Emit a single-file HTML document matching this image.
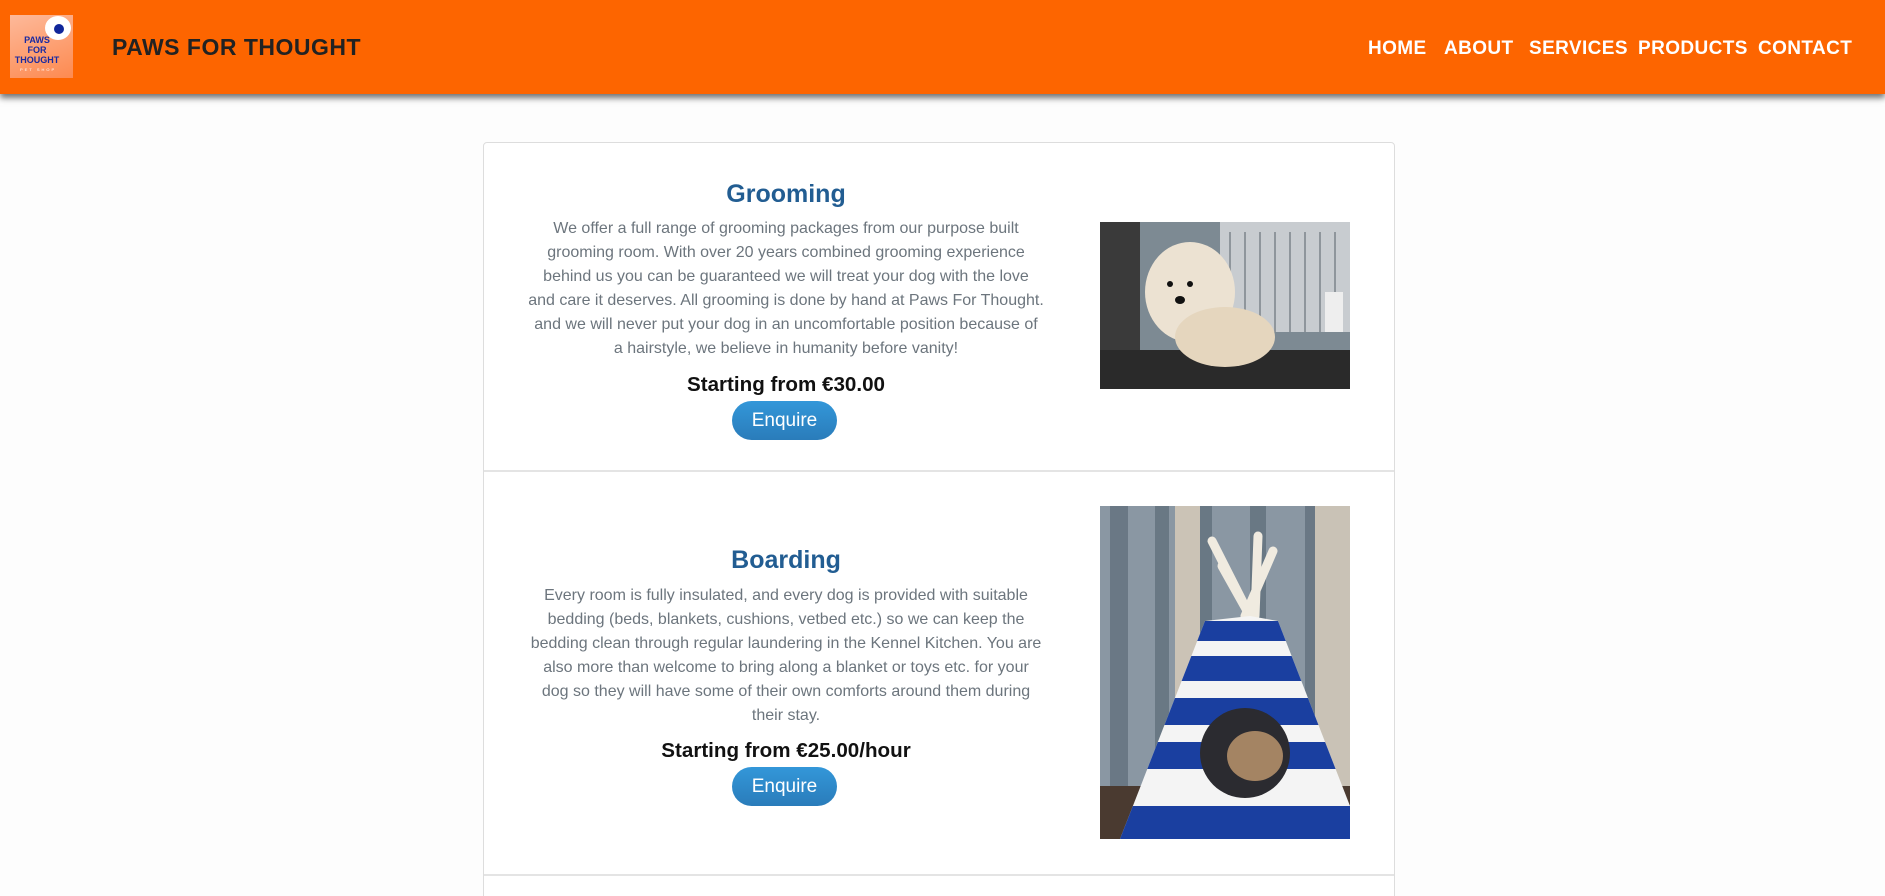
<!DOCTYPE html>
<html><head><meta charset="utf-8"><style>
*{margin:0;padding:0;box-sizing:border-box}
html,body{width:1885px;height:896px;overflow:hidden}
body{background:#fdfdfd;font-family:"Liberation Sans",sans-serif;position:relative}
.hdr{position:absolute;left:0;top:0;width:1885px;height:94px;background:#fd6500;box-shadow:0 4px 6px rgba(0,0,0,.55)}
.logo{position:absolute;left:10px;top:15px;width:63px;height:63px;background:linear-gradient(160deg,#fdb99a,#fd8a50)}
.logo .b{position:absolute;left:35px;top:1px;width:26px;height:24px;border-radius:50%;background:#fff}
.logo .b i{position:absolute;left:9px;top:8px;width:10px;height:10px;border-radius:50%;background:#10269a}
.logo .t{position:absolute;left:2px;top:20px;width:50px;text-align:center;color:#1a2aa0;font:bold 9px/10px "Liberation Sans",sans-serif}
.logo .s{position:absolute;left:10px;top:52px;color:#fff;font-size:4px;letter-spacing:2px}
.title{position:absolute;left:112px;top:34px;font:bold 23px/26px "Liberation Sans",sans-serif;color:#222;letter-spacing:.5px}
.nav{position:absolute;top:39px;font:bold 19px/20px "Liberation Sans",sans-serif;color:#fff;white-space:nowrap;letter-spacing:.4px}
.card{position:absolute;left:483px;top:142px;width:912px;height:770px;border:1px solid #ddd;border-radius:4px;background:#fff}
.hr{position:absolute;left:484px;width:910px;height:2px;background:#e4e4e4}
.h{position:absolute;left:529px;width:514px;text-align:center;color:#225d92;font:bold 25px/30px "Liberation Sans",sans-serif}
.p{position:absolute;left:486px;width:600px;text-align:center;color:#6c757d;font-size:16px;line-height:24px;white-space:nowrap}
.pr{position:absolute;left:529px;width:514px;text-align:center;color:#111;font:bold 20.6px/22px "Liberation Sans",sans-serif}
.btn{position:absolute;border-radius:20px;background:linear-gradient(#3397d9,#2a7cba);color:#fff;font-size:19px;text-align:center}
</style></head><body>
<div class="hdr">
 <div class="logo"><div class="b"><i></i></div><div class="t">PAWS<br>FOR<br>THOUGHT</div><div class="s">PET SHOP</div></div>
 <div class="title">PAWS FOR THOUGHT</div>
 <div class="nav" style="left:1368px">HOME</div>
 <div class="nav" style="left:1444px">ABOUT</div>
 <div class="nav" style="left:1529px">SERVICES</div>
 <div class="nav" style="left:1638px">PRODUCTS</div>
 <div class="nav" style="left:1758px">CONTACT</div>
</div>
<div class="card"></div>
<div class="h" style="top:179px">Grooming</div>
<div class="p" style="top:217px">We offer a full range of grooming packages from our purpose built<br>grooming room. With over 20 years combined grooming experience<br>behind us you can be guaranteed we will treat your dog with the love<br>and care it deserves. All grooming is done by hand at Paws For Thought.<br>and we will never put your dog in an uncomfortable position because of<br>a hairstyle, we believe in humanity before vanity!</div>
<div class="pr" style="top:374px">Starting from €30.00</div>
<div class="btn" style="left:732px;top:401px;width:105px;height:39px;line-height:39px">Enquire</div>
<svg style="position:absolute;left:1100px;top:222px" width="250" height="167" viewBox="0 0 250 167">
<rect width="250" height="167" fill="#7d8a93"/>
<rect x="120" y="0" width="130" height="110" fill="#c8ccd0"/>
<g stroke="#8f969c" stroke-width="2"><line x1="130" y1="10" x2="130" y2="110"/><line x1="145" y1="10" x2="145" y2="110"/><line x1="160" y1="10" x2="160" y2="110"/><line x1="175" y1="10" x2="175" y2="110"/><line x1="190" y1="10" x2="190" y2="110"/><line x1="205" y1="10" x2="205" y2="110"/><line x1="220" y1="10" x2="220" y2="110"/><line x1="235" y1="10" x2="235" y2="110"/></g>
<rect x="0" y="0" width="40" height="167" fill="#3a3a3a"/>
<rect x="0" y="128" width="250" height="39" fill="#2a2a2a"/>
<ellipse cx="90" cy="70" rx="45" ry="50" fill="#ece2d2"/>
<ellipse cx="125" cy="115" rx="50" ry="30" fill="#e5d6be"/>
<circle cx="70" cy="62" r="3" fill="#111"/><circle cx="90" cy="62" r="3" fill="#111"/><ellipse cx="80" cy="78" rx="5" ry="4" fill="#111"/>
<rect x="225" y="70" width="18" height="40" fill="#eee"/>
</svg>
<div class="hr" style="top:470px"></div>
<div class="h" style="top:545px">Boarding</div>
<div class="p" style="top:584px">Every room is fully insulated, and every dog is provided with suitable<br>bedding (beds, blankets, cushions, vetbed etc.) so we can keep the<br>bedding clean through regular laundering in the Kennel Kitchen. You are<br>also more than welcome to bring along a blanket or toys etc. for your<br>dog so they will have some of their own comforts around them during<br>their stay.</div>
<div class="pr" style="top:740px">Starting from €25.00/hour</div>
<div class="btn" style="left:732px;top:767px;width:105px;height:39px;line-height:39px">Enquire</div>
<svg style="position:absolute;left:1100px;top:506px" width="250" height="333" viewBox="0 0 250 333">
<rect width="250" height="333" fill="#8a97a3"/>
<g fill="#5c6b78" opacity=".7"><rect x="10" y="0" width="18" height="333"/><rect x="55" y="0" width="14" height="333"/><rect x="100" y="0" width="12" height="333"/><rect x="150" y="0" width="16" height="333"/><rect x="205" y="0" width="14" height="333"/></g>
<rect x="75" y="0" width="25" height="333" fill="#cbc3b6"/><rect x="215" y="0" width="35" height="333" fill="#c9c2b6"/>
<rect x="0" y="280" width="250" height="53" fill="#4a3a30"/>
<g stroke="#f0ebe0" stroke-width="9" stroke-linecap="round"><line x1="112" y1="35" x2="150" y2="110"/><line x1="158" y1="30" x2="155" y2="110"/><line x1="173" y1="45" x2="145" y2="110"/><line x1="122" y1="60" x2="150" y2="110"/></g>
<clipPath id="tp"><polygon points="150,110 105,115 20,333 250,333 250,300 178,115"/></clipPath>
<g clip-path="url(#tp)"><rect width="250" height="333" fill="#f4f4f4"/>
<rect y="115" width="250" height="20" fill="#1a3fa0"/><rect y="150" width="250" height="25" fill="#1a3fa0"/><rect y="192" width="250" height="27" fill="#1a3fa0"/><rect y="236" width="250" height="27" fill="#1a3fa0"/><rect y="300" width="250" height="33" fill="#1a3fa0"/></g>
<circle cx="145" cy="247" r="45" fill="#2b2b30"/>
<ellipse cx="155" cy="250" rx="28" ry="25" fill="#a48463"/>
</svg>
<div class="hr" style="top:874px"></div>
</body></html>
